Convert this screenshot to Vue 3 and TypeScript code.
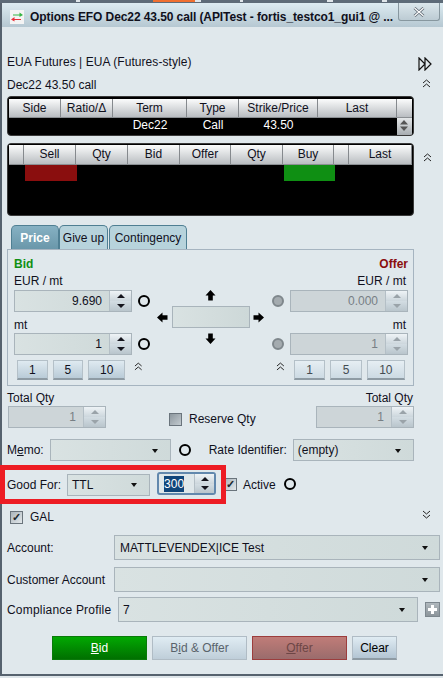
<script setup lang="ts">
const legHeaders = [
  { label: 'Side', width: 52 },
  { label: 'Ratio/Δ', width: 52 },
  { label: 'Term', width: 74 },
  { label: 'Type', width: 52 },
  { label: 'Strike/Price', width: 79 },
  { label: 'Last', width: 79 },
]
const legCells = ['', '', 'Dec22', 'Call', '43.50', '']
const bookHeaders = [
  { label: '', width: 15 },
  { label: 'Sell', width: 52 },
  { label: 'Qty', width: 52 },
  { label: 'Bid', width: 52 },
  { label: 'Offer', width: 51 },
  { label: 'Qty', width: 52 },
  { label: 'Buy', width: 51 },
  { label: '', width: 15 },
  { label: 'Last', width: 63 },
]
const tabs = ['Price', 'Give up', 'Contingency']
const quick = [1, 5, 10]
</script>

<template>
  <div class="screen">
    <div class="topstrip">
      <span class="seg s1"></span><span class="seg s2"></span><span class="seg s3"></span>
      <span class="seg s4"></span><span class="seg s5"></span><span class="seg s6"></span>
    </div>
    <div class="window">
      <header class="titlebar">
        <svg class="appicon" width="14" height="14" viewBox="0 0 14 14">
          <rect width="14" height="14" fill="#f4f4f4" />
          <path d="M3 4.500H9.500V2.500L13 5L9.500 7V5.500H3Z" fill="#35b544" />
          <path d="M11 9H4.500V7L1 9.500L4.500 11.500V10H11Z" fill="#e8313a" />
        </svg>
        <span class="title">Options EFO Dec22 43.50 call (APITest - fortis_testco1_gui1 @ ...</span>
        <button class="close">
          <svg width="12" height="10" viewBox="0 0 12 10">
            <path d="M1.500 1L10.500 9M10.500 1L1.500 9" stroke="#5b6670" stroke-width="2.800" fill="none" />
            <path d="M1.500 1L10.500 9M10.500 1L1.500 9" stroke="#fff" stroke-width="1.200" fill="none" />
          </svg>
        </button>
      </header>

      <main class="body">
        <div class="line product">
          <span>EUA Futures | EUA (Futures-style)</span>
          <svg class="ff" width="14" height="14" viewBox="0 0 14 14">
            <path d="M1 1L7 7L1 13ZM7 1L13 7L7 13Z" fill="none" stroke="#111" stroke-width="1.200" />
          </svg>
        </div>
        <div class="line strategy">
          <span>Dec22 43.50 call</span>
          <svg class="chev" width="9" height="9" viewBox="0 0 9 9">
            <path d="M1 4L4.500 1L8 4M1 8L4.500 5L8 8" fill="none" stroke="#222" stroke-width="1" />
          </svg>
        </div>

        <div class="table-row">
          <div class="table legs">
            <div class="thead">
              <div v-for="h in legHeaders" :key="h.label" class="th" :style="{ width: h.width + 'px' }">{{ h.label }}</div>
              <div class="th filler"></div>
            </div>
            <div class="trow">
              <div
                v-for="(c, i) in legCells"
                :key="i"
                class="td"
                :style="{ width: legHeaders[i].width + 'px' }"
              >{{ c }}</div>
              <div class="scrollbar">
                <svg width="14" height="15" viewBox="0 0 14 15">
                  <path d="M7 2L11 6.500H3Z" fill="#555" />
                  <path d="M7 13L11 8.500H3Z" fill="#555" />
                </svg>
              </div>
            </div>
          </div>
        </div>

        <div class="table-row second">
          <div class="table book">
            <div class="thead">
              <div v-for="(h, i) in bookHeaders" :key="i" class="th" :style="{ width: h.width + 'px' }">{{ h.label }}</div>
            </div>
            <div class="bookbody">
              <div class="flash sell"></div>
              <div class="flash buy"></div>
            </div>
          </div>
          <svg class="chev side" width="9" height="9" viewBox="0 0 9 9">
            <path d="M1 4L4.500 1L8 4M1 8L4.500 5L8 8" fill="none" stroke="#222" stroke-width="1" />
          </svg>
        </div>

        <div class="tabs">
          <div v-for="(t, i) in tabs" :key="t" class="tab" :class="['tab' + i, { active: i === 0 }]">{{ t }}</div>
        </div>

        <section class="panel">
          <div class="side-col">
            <div class="side-name bid">Bid</div>
            <div class="cap">EUR / mt</div>
            <div class="field-row">
              <div class="spin wide">
                <span class="val">9.690</span>
                <span class="btns"><i class="up"></i><i class="down"></i></span>
              </div>
              <span class="ring"></span>
            </div>
            <div class="cap low">mt</div>
            <div class="field-row">
              <div class="spin wide">
                <span class="val">1</span>
                <span class="btns"><i class="up"></i><i class="down"></i></span>
              </div>
              <span class="ring"></span>
            </div>
            <div class="quick">
              <button v-for="q in quick" :key="q" class="qbtn" :class="{ big: q === 10 }">{{ q }}</button>
              <svg class="chev" width="9" height="9" viewBox="0 0 9 9">
                <path d="M1 4L4.500 1L8 4M1 8L4.500 5L8 8" fill="none" stroke="#222" stroke-width="1" />
              </svg>
            </div>
          </div>

          <div class="center">
            <svg class="arrow" width="11" height="11" viewBox="0 0 11 11"><path d="M5.500 0L10.500 5.500H7.800V10.500H3.200V5.500H0.500Z" fill="#000" /></svg>
            <div class="center-mid">
              <svg class="arrow" width="11" height="11" viewBox="0 0 11 11"><path d="M0 5.500L5.500 0.500V3.200H10.500V7.800H5.500V10.500Z" fill="#000" /></svg>
              <div class="price-box"></div>
              <svg class="arrow" width="11" height="11" viewBox="0 0 11 11"><path d="M11 5.500L5.500 0.500V3.200H0.500V7.800H5.500V10.500Z" fill="#000" /></svg>
            </div>
            <svg class="arrow" width="11" height="11" viewBox="0 0 11 11"><path d="M5.500 11L10.500 5.500H7.800V0.500H3.200V5.500H0.500Z" fill="#000" /></svg>
          </div>

          <div class="side-col right">
            <div class="side-name offer">Offer</div>
            <div class="cap">EUR / mt</div>
            <div class="field-row">
              <span class="ring off"></span>
              <div class="spin wide off">
                <span class="val">0.000</span>
                <span class="btns"><i class="up"></i><i class="down"></i></span>
              </div>
            </div>
            <div class="cap low">mt</div>
            <div class="field-row">
              <span class="ring off"></span>
              <div class="spin wide off">
                <span class="val">1</span>
                <span class="btns"><i class="up"></i><i class="down"></i></span>
              </div>
            </div>
            <div class="quick">
              <svg class="chev" width="9" height="9" viewBox="0 0 9 9">
                <path d="M1 4L4.500 1L8 4M1 8L4.500 5L8 8" fill="none" stroke="#222" stroke-width="1" />
              </svg>
              <button v-for="q in quick" :key="q" class="qbtn faded" :class="{ big: q === 10 }">{{ q }}</button>
            </div>
          </div>
        </section>

        <div class="totals">
          <div class="total">
            <div class="cap">Total Qty</div>
            <div class="spin narrow off">
              <span class="val">1</span>
              <span class="btns"><i class="up"></i><i class="down"></i></span>
            </div>
          </div>
          <label class="check reserve"><span class="box"></span>Reserve Qty</label>
          <div class="total end">
            <div class="cap">Total Qty</div>
            <div class="spin narrow off">
              <span class="val">1</span>
              <span class="btns"><i class="up"></i><i class="down"></i></span>
            </div>
          </div>
        </div>

        <div class="memo">
          <span class="lbl">M<u>e</u>mo:</span>
          <div class="select memo-sel"><span></span><b></b></div>
          <span class="ring"></span>
          <span class="lbl rate">Rate Identifier:</span>
          <div class="select rate-sel"><span>(empty)</span><b></b></div>
        </div>

        <div class="goodfor">
          <span class="lbl">Good For:</span>
          <div class="select ttl"><span>TTL</span><b></b></div>
          <div class="spin focus">
            <span class="val"><mark>300</mark></span>
            <span class="btns"><i class="up"></i><i class="down"></i></span>
          </div>
          <label class="check active-check"><span class="box on">✓</span>Active</label>
          <span class="ring"></span>
          <div class="redbox"></div>
        </div>

        <div class="gal">
          <label class="check"><span class="box on">✓</span>GAL</label>
          <svg class="chev" width="9" height="9" viewBox="0 0 9 9">
            <path d="M1 1L4.500 4L8 1M1 5L4.500 8L8 5" fill="none" stroke="#222" stroke-width="1" />
          </svg>
        </div>

        <div class="acct first">
          <span class="lbl">Account:</span>
          <div class="select big"><span>MATTLEVENDEX|ICE Test</span><b></b></div>
        </div>
        <div class="acct">
          <span class="lbl">Customer Account</span>
          <div class="select big"><span></span><b></b></div>
        </div>
        <div class="acct profile">
          <span class="lbl">Compliance Profile</span>
          <div class="select big"><span>7</span><b></b></div>
          <span class="plus"></span>
        </div>

        <footer class="actions">
          <button class="act bid-btn"><u>B</u>id</button>
          <button class="act both">B<u>i</u>d &amp; Offer</button>
          <button class="act offer-btn"><u>O</u>ffer</button>
          <button class="act clear">Clear</button>
        </footer>
      </main>
    </div>
    <div class="bottom-edge"></div>
  </div>
</template>

<style>
html,
body {
  margin: 0;
  background: #5d6b78;
}
</style>

<style scoped>
.screen {
  width: 443px;
  height: 678px;
  overflow: hidden;
  display: flex;
  flex-direction: column;
  font-family: "Liberation Sans", Arial, sans-serif;
  font-size: 12px;
  color: #10101c;
  background: #56626e;
}
.topstrip {
  height: 3px;
  display: flex;
  background: #5d6b78;
  flex: none;
}
.seg {
  height: 2px;
  background: #dfe6ea;
}
.s1 {
  width: 4px;
  margin-left: 76px;
}
.s2 {
  width: 42px;
  margin-left: 73px;
  background: #f07030;
}
.s3 {
  width: 6px;
}
.s4 {
  width: 3px;
  margin-left: 39px;
}
.s5 {
  width: 6px;
  margin-left: 84px;
}
.s6 {
  width: 5px;
  margin-left: 49px;
}
.window {
  height: 671px;
  flex: none;
  margin-left: 2px;
  background: #e0e8ec;
  display: flex;
  flex-direction: column;
}
.bottom-edge {
  height: 2px;
  margin-top: 2px;
  background: #dfe6ea;
  flex: none;
}
.titlebar {
  box-sizing: border-box;
  height: 24px;
  flex: none;
  display: flex;
  align-items: center;
  padding: 4px 0 0 8px;
  position: relative;
  border-radius: 3px 0 0 0;
  background: linear-gradient(#dcebf1, #b6c8d2);
}
.appicon {
  flex: none;
}
.title {
  margin-left: 6px;
  font-size: 12px;
  font-weight: bold;
  white-space: nowrap;
  letter-spacing: -0.09px;
}
.close {
  position: absolute;
  right: 3px;
  top: 0;
  width: 42px;
  height: 18px;
  padding: 0;
  border: 1px solid #87979f;
  border-top: none;
  border-radius: 0 0 3px 3px;
  background: linear-gradient(#dbe7ec, #bccbd3);
  display: flex;
  align-items: center;
  justify-content: center;
}
.body {
  flex: 1;
  padding: 0 3px 0 5px;
  display: flex;
  flex-direction: column;
}
.line {
  display: flex;
  justify-content: space-between;
  align-items: center;
  height: 16px;
}
.product {
  margin-top: 27px;
  padding-right: 8px;
  letter-spacing: 0.06px;
}
.product .ff {
  margin-top: 4px;
}
.strategy {
  margin-top: 7px;
  padding-right: 9px;
}
.strategy .chev {
  margin-top: -3px;
}
.table-row {
  margin-top: 3px;
  display: flex;
  align-items: flex-start;
}
.second {
  margin-top: 7px;
}
.side {
  margin: 10px 0 0 9px;
}
.table {
  background: #000;
  border: 1px solid #3a3a3a;
  border-radius: 4px;
  padding: 2px 1px 0;
  overflow: hidden;
  box-sizing: border-box;
}
.legs {
  width: 407px;
  height: 40px;
}
.book {
  width: 407px;
  height: 73px;
  padding-top: 1px;
}
.thead {
  display: flex;
  height: 19px;
  background: linear-gradient(#fbfcfc, #b9bdc1);
  border-bottom: 1px solid #8b8f93;
  box-sizing: border-box;
}
.book .thead {
  height: 20px;
}
.th {
  flex: none;
  box-sizing: border-box;
  border-right: 1px solid #85898d;
  text-align: center;
  line-height: 18px;
}
.book .th {
  line-height: 19px;
}
.filler {
  flex: 1;
  border-right: none;
}
.trow {
  display: flex;
  height: 17px;
  color: #fff;
}
.td {
  flex: none;
  text-align: center;
  line-height: 15px;
}
.scrollbar {
  margin-left: auto;
  width: 15px;
  background: linear-gradient(#e3e6e8, #a8adb1);
  overflow: hidden;
}
.bookbody {
  display: flex;
  height: 16px;
  position: relative;
}
.flash {
  height: 16px;
  width: 52px;
}
.sell {
  margin-left: 16px;
  background: #8a0e0e;
}
.buy {
  margin-left: 207px;
  width: 51px;
  background: #0f8f13;
}
.tabs {
  margin-top: 9px;
  margin-left: 4px;
  display: flex;
  height: 24px;
  flex: none;
}
.tab {
  box-sizing: border-box;
  border: 1px solid #4f7f93;
  border-bottom: none;
  border-radius: 5px 5px 0 0;
  background: #b7d3dc;
  text-align: center;
  line-height: 24px;
}
.tab0 {
  width: 48px;
}
.tab1 {
  width: 49px;
  margin-right: 1px;
}
.tab2 {
  width: 78px;
}
.tab.active {
  background: linear-gradient(#86b1c3, #6a97aa);
  color: #fff;
  font-weight: bold;
}
.panel {
  width: 407px;
  height: 137px;
  box-sizing: border-box;
  border: 1px solid #a6b4c0;
  padding: 7px 5px 0 6px;
  display: flex;
}
.side-col {
  width: 133px;
  flex: none;
}
.side-col.right {
  width: 136px;
  margin-left: auto;
  text-align: right;
}
.side-name {
  font-weight: bold;
  line-height: 14px;
}
.bid {
  color: #0f8f13;
}
.offer {
  color: #8a0e0e;
}
.cap {
  line-height: 14px;
  margin-top: 3px;
}
.right .cap {
  padding-right: 2px;
}
.cap.low {
  margin-top: 6px;
  margin-bottom: -1px;
}
.field-row {
  display: flex;
  align-items: center;
  gap: 6px;
  margin-top: 2px;
}
.spin {
  box-sizing: border-box;
  display: flex;
  border: 1px solid #a9b4bb;
  background: linear-gradient(90deg, #d9e2e2, #cdd8d8);
  text-align: right;
  flex: none;
}
.wide {
  width: 118px;
  height: 22px;
}
.narrow {
  width: 98px;
  height: 22px;
}
.val {
  flex: 1;
  line-height: 20px;
  padding-right: 7px;
}
.btns {
  flex: none;
  width: 22px;
  display: flex;
  flex-direction: column;
  background: #dde5ea;
  border-left: 1px solid #b4bfc6;
  box-sizing: border-box;
}
.btns i {
  flex: 1;
  position: relative;
  display: block;
}
.btns i::after {
  content: "";
  position: absolute;
  left: 50%;
  top: 50%;
  margin: -2px 0 0 -4px;
  border-left: 4px solid transparent;
  border-right: 4px solid transparent;
}
.btns .up {
  background: linear-gradient(#eef3f6, #ccd6dc);
}
.btns .down {
  background: linear-gradient(#d3dde3, #b9c5cc);
}
.btns .up::after {
  border-bottom: 4px solid #14141c;
}
.btns .down::after {
  border-top: 4px solid #14141c;
}
.spin.off {
  background: #cdd5d8;
  color: #777f85;
}
.off .btns .up::after {
  border-bottom-color: #9aa3a9;
}
.off .btns .down::after {
  border-top-color: #9aa3a9;
}
.ring {
  box-sizing: border-box;
  width: 12px;
  height: 12px;
  border-radius: 50%;
  border: 2px solid #000;
  flex: none;
}
.ring.off {
  background: #a4abaf;
  border-color: #7f878c;
}
.quick {
  display: flex;
  align-items: flex-start;
  gap: 5px;
  margin-top: 5px;
  padding-left: 3px;
}
.right .quick {
  padding-left: 0;
  justify-content: flex-end;
  padding-right: 3px;
}
.qbtn {
  box-sizing: border-box;
  width: 32px;
  height: 20px;
  padding: 0;
  font: inherit;
  color: inherit;
  border: 1px solid #b4c0c8;
  border-bottom: 2px solid #8e9ba4;
  background: linear-gradient(#dfeaf1, #b9cbd7);
}
.qbtn.big {
  width: 39px;
}
.qbtn.faded {
  background: linear-gradient(#e6eef3, #ccdae3);
  color: #444c52;
}
.quick .chev {
  margin: 2px 4px 0;
}
.center {
  flex: none;
  width: 107px;
  margin-left: 10px;
  display: flex;
  flex-direction: column;
  align-items: center;
  padding-top: 33px;
}
.center-mid {
  display: flex;
  align-items: center;
  justify-content: space-between;
  width: 100%;
  margin: 5px 0;
}
.price-box {
  box-sizing: border-box;
  width: 78px;
  height: 22px;
  border: 1px solid #a9b4bb;
  background: linear-gradient(90deg, #d9e2e2, #cdd8d8);
}
.totals {
  display: flex;
  margin-top: 5px;
  width: 406px;
  margin-left: 1px;
}
.total .cap {
  margin-top: 0;
  margin-bottom: 1px;
  margin-left: -1px;
}
.total.end {
  text-align: right;
}
.total.end .cap {
  margin-left: 0;
  padding-right: 1px;
}
.check {
  display: flex;
  align-items: center;
  gap: 7px;
}
.reserve {
  margin: 18px auto 0 63px;
  height: 20px;
}
.box {
  box-sizing: border-box;
  width: 13px;
  height: 13px;
  border: 1px solid #6a747c;
  background: linear-gradient(135deg, #8d979e, #c3cbd0);
  display: block;
  flex: none;
  text-align: center;
  font-size: 11px;
  font-weight: bold;
  line-height: 11px;
  color: #20282e;
}
.box.on {
  background: linear-gradient(135deg, #aab4ba, #e3e8eb);
}
.memo {
  display: flex;
  align-items: center;
  margin-top: 10px;
  height: 22px;
}
.lbl {
  flex: none;
}
.select {
  box-sizing: border-box;
  display: flex;
  align-items: center;
  justify-content: space-between;
  border: 1px solid #a9b4bb;
  background: linear-gradient(90deg, #d9e2e2, #cfdada);
  padding: 0 12px 0 4px;
  height: 22px;
}
.select b {
  width: 0;
  height: 0;
  border-left: 3px solid transparent;
  border-right: 3px solid transparent;
  border-top: 4px solid #111;
  margin-top: 1px;
}
.memo-sel {
  width: 121px;
  margin-left: 6px;
}
.memo .ring {
  margin-left: 8px;
}
.rate {
  margin-left: 18px;
}
.rate-sel {
  width: 121px;
  margin-left: 6px;
}
.goodfor {
  position: relative;
  display: flex;
  align-items: center;
  margin-top: 12px;
  height: 23px;
}
.ttl {
  width: 83px;
  margin-left: 6px;
}
.focus {
  width: 59px;
  height: 23px;
  margin: -2px 0 0 7px;
  border: 2px solid #6288ad;
  border-radius: 3px;
  background: #dfe7ea;
  text-align: left;
}
.focus .val {
  padding: 0 0 0 5px;
}
mark {
  background: #10457a;
  color: #fff;
  padding: 1px 0;
}
.focus .btns {
  width: 20px;
}
.active-check {
  margin-left: 8px;
  gap: 6px;
}
.goodfor .ring {
  margin-left: 8px;
  margin-top: -1px;
}
.redbox {
  position: absolute;
  left: -7px;
  top: -8px;
  width: 226px;
  height: 39px;
  box-sizing: border-box;
  border: 5px solid #ed1c24;
}
.gal {
  display: flex;
  justify-content: space-between;
  align-items: center;
  margin-top: 14px;
  height: 14px;
  padding-left: 3px;
  padding-right: 9px;
}
.gal .chev {
  margin-top: -6px;
}
.acct {
  display: flex;
  align-items: center;
  justify-content: space-between;
  height: 25px;
  margin-top: 7px;
  width: 433px;
}
.acct.first {
  margin-top: 11px;
}
.acct .big {
  height: 25px;
  width: 326px;
  padding-right: 11px;
  padding-left: 5px;
}
.profile {
  margin-top: 5px;
  justify-content: flex-start;
}
.profile .lbl {
  width: 105px;
  letter-spacing: 0.2px;
  white-space: nowrap;
}
.profile .big {
  width: 301px;
  margin-left: 6px;
  padding-left: 4px;
  padding-right: 12px;
}
.plus {
  position: relative;
  width: 15px;
  height: 15px;
  margin-left: 7px;
  flex: none;
  box-sizing: border-box;
  border: 1px solid #7d878e;
  background: linear-gradient(#b0b8bd, #8c959b);
}
.plus::before,
.plus::after {
  content: "";
  position: absolute;
  background: #fff;
}
.plus::before {
  left: 2px;
  right: 2px;
  top: 5px;
  height: 3px;
}
.plus::after {
  top: 2px;
  bottom: 2px;
  left: 5px;
  width: 3px;
}
.actions {
  display: flex;
  gap: 5px;
  margin-top: 14px;
  padding-left: 45px;
}
.act {
  box-sizing: border-box;
  width: 95px;
  height: 24px;
  padding: 0;
  font: inherit;
  border: 1px solid #b0bcc5;
}
.bid-btn {
  color: #fff;
  border-color: #0a7a0a;
  background: linear-gradient(#02a802, #007000);
}
.both {
  color: #59636b;
  background: linear-gradient(#e0ecf3, #bfced9);
}
.offer-btn {
  color: #6d4646;
  border-color: #9c3d3d;
  background: linear-gradient(#c07c78, #9a6c6c);
}
.clear {
  width: 45px;
  border-bottom: 2px solid #8e9ba4;
  background: linear-gradient(#e0ecf3, #b3c5d3);
}
</style>
